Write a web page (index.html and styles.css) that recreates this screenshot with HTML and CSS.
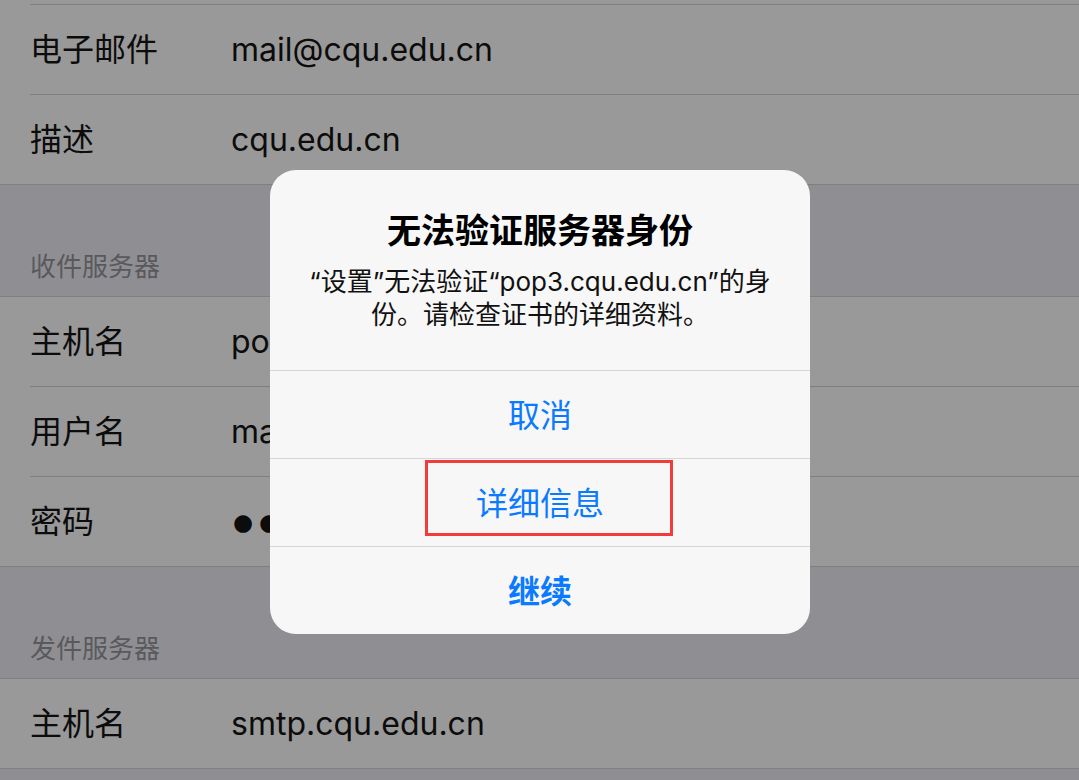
FILE: index.html
```html
<!DOCTYPE html>
<html lang="zh-CN">
<head>
  <meta charset="UTF-8" />
  <meta name="viewport" content="width=device-width, initial-scale=1.0"/>
  <title>账户</title>
  <link rel="stylesheet" href="styles.css">
</head>
<body>
  <div class="settings">
    <div class="group">
      <div class="row stub"><div class="row-body"></div></div>
      <div class="row">
        <div class="row-body"><span class="label">电子邮件</span><span class="value">mail@cqu.edu.cn</span></div>
      </div>
      <div class="row">
        <div class="row-body"><span class="label">描述</span><span class="value">cqu.edu.cn</span></div>
      </div>
    </div>

    <div class="group-header">收件服务器</div>
    <div class="group">
      <div class="row">
        <div class="row-body"><span class="label">主机名</span><span class="value">pop3.cqu.edu.cn</span></div>
      </div>
      <div class="row">
        <div class="row-body"><span class="label">用户名</span><span class="value">mail@cqu.edu.cn</span></div>
      </div>
      <div class="row">
        <div class="row-body"><span class="label">密码</span><span class="value dots">●●●●●●●●</span></div>
      </div>
    </div>

    <div class="group-header">发件服务器</div>
    <div class="group">
      <div class="row">
        <div class="row-body"><span class="label">主机名</span><span class="value">smtp.cqu.edu.cn</span></div>
      </div>
    </div>
  </div>

  <div class="alert">
    <div class="alert-content">
      <div class="alert-title">无法验证服务器身份</div>
      <div class="alert-message">“设置”无法验证“pop3.cqu.edu.cn”的身份。请检查证书的详细资料。</div>
    </div>
    <div class="alert-actions">
      <button class="action">取消</button>
      <button class="action">详细信息<span class="highlight"></span></button>
      <button class="action preferred">继续</button>
    </div>
  </div>
</body>
</html>
```

FILE: styles.css
```css
body {
  margin: 0;
  height: 780px;
  overflow: hidden;
  background: #8f8f93;
  font-family: Inter, "Noto Sans CJK SC", sans-serif;
  color: #0c0c0c;
}
.settings {
  display: flex;
  flex-direction: column;
}
.group {
  background: #999999;
  border-top: 1px solid #7f7f80;
  border-bottom: 1px solid #7f7f80;
}
.group:first-child {
  border-top: none;
}
.row {
  padding-left: 30px;
}
.row-body {
  height: 89px;
  display: flex;
  align-items: center;
  border-bottom: 1px solid #7f7f80;
  font-size: 32px;
}
.row:last-child .row-body {
  border-bottom: none;
}
.row.stub .row-body {
  height: 4px;
}
.label {
  width: 201px;
  flex-shrink: 0;
  padding-bottom: 6px;
}
.value {
  white-space: nowrap;
}
.value.dots {
  font-family: "DejaVu Sans", sans-serif;
  font-size: 23px;
  letter-spacing: 6px;
  padding-left: 2px;
}
.group-header {
  height: 111px;
  display: flex;
  align-items: flex-end;
  padding: 0 0 13px 30px;
  box-sizing: border-box;
  font-size: 26px;
  line-height: 32px;
  color: #59595d;
}

/* alert sheet */
.alert {
  position: absolute;
  left: 270px;
  top: 170px;
  width: 540px;
  background: #f7f7f7;
  border-radius: 26px;
  overflow: hidden;
}
.alert-content {
  padding: 41px 36px 39px;
  text-align: center;
}
.alert-title {
  font-size: 34px;
  line-height: 40px;
  font-weight: 600;
  color: #000;
}
.alert-message {
  margin-top: 14px;
  font-size: 26px;
  line-height: 33px;
  color: #111;
}
.alert-actions {
  display: flex;
  flex-direction: column;
}
.action {
  position: relative;
  height: 88px;
  border: none;
  border-top: 1px solid #d6d6d8;
  background: transparent;
  font-family: inherit;
  font-size: 32px;
  color: #0a7aff;
  padding: 0 0 4px;
}
.action.preferred {
  font-weight: 600;
}
.highlight {
  position: absolute;
  left: 155px;
  top: 1px;
  width: 248px;
  height: 76px;
  box-sizing: border-box;
  border: 3px solid #f23b3b;
}
```
